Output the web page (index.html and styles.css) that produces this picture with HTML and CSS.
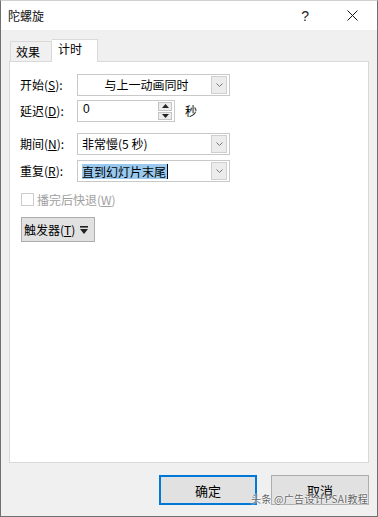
FILE: index.html
```html
<!DOCTYPE html>
<html lang="zh-CN">
<head>
  <meta charset="UTF-8" />
  <meta name="viewport" content="width=device-width, initial-scale=1.0"/>
  <title>陀螺旋</title>
  <link rel="stylesheet" href="styles.css">
</head>
<body>

  <div class="window">
    <div class="titlebar">
      <span class="title">陀螺旋</span>
      <span class="help">?</span>
      <span class="close">
        <svg width="11" height="11" viewBox="0 0 11 11"><path d="M0.5 0.5 L10.5 10.5 M10.5 0.5 L0.5 10.5" stroke="#111" stroke-width="1"/></svg>
      </span>
    </div>

    <div class="client">
      <div class="tabs">
        <div class="tab">效果</div>
        <div class="tab active">计时</div>
      </div>

      <div class="panel">
        <div class="row">
          <span class="label">开始(<u>S</u>):</span>
          <div class="combo center">
            <span class="value">与上一动画同时</span>
            <span class="drop"><svg width="7" height="4" viewBox="0 0 7 4"><path d="M0.5 0.5 L3.5 3.5 L6.5 0.5" fill="none" stroke="#777" stroke-width="1"/></svg></span>
          </div>
        </div>

        <div class="row delay">
          <span class="label">延迟(<u>D</u>):</span>
          <div class="spinbox">
            <span class="value">0</span>
            <div class="spins">
              <span class="spin"><svg width="7" height="4" viewBox="0 0 7 4"><path d="M0 4 L3.5 0 L7 4 Z" fill="#222"/></svg></span>
              <span class="spin"><svg width="7" height="4" viewBox="0 0 7 4"><path d="M0 0 L3.5 4 L7 0 Z" fill="#222"/></svg></span>
            </div>
          </div>
          <span class="unit">秒</span>
        </div>

        <div class="row duration">
          <span class="label">期间(<u>N</u>):</span>
          <div class="combo">
            <span class="value">非常慢(5 秒)</span>
            <span class="drop"><svg width="7" height="4" viewBox="0 0 7 4"><path d="M0.5 0.5 L3.5 3.5 L6.5 0.5" fill="none" stroke="#777" stroke-width="1"/></svg></span>
          </div>
        </div>

        <div class="row repeat">
          <span class="label">重复(<u>R</u>):</span>
          <div class="combo">
            <span class="value"><span class="selected">直到幻灯片末尾</span><span class="caret"></span></span>
            <span class="drop"><svg width="7" height="4" viewBox="0 0 7 4"><path d="M0.5 0.5 L3.5 3.5 L6.5 0.5" fill="none" stroke="#777" stroke-width="1"/></svg></span>
          </div>
        </div>

        <div class="check">
          <span class="box"></span>
          <span>播完后快退(<u>W</u>)</span>
        </div>

        <button class="trigger">
          <span class="trigger-text">触发器(<u>T</u>)</span>
          <svg width="8" height="8" viewBox="0 0 8 8"><rect x="0" y="0" width="8" height="1.6" fill="#222"/><path d="M0 3 L8 3 L4 8 Z" fill="#222"/></svg>
        </button>
      </div>

      <div class="actions">
        <button class="btn primary">确定</button>
        <button class="btn">取消</button>
      </div>
    </div>

    <div class="watermark">头条 @广告设计PSAI教程</div>
  </div>

</body>
</html>
```

FILE: styles.css
```css
* { box-sizing: border-box; }

body {
  margin: 0;
  font-family: "Noto Sans CJK SC", "Noto Sans", sans-serif;
  font-size: 12px;
  color: #000;
  background: #fff;
}

.window {
  position: relative;
  width: 378px;
  height: 517px;
  border: 1px solid #707070;
  border-top-color: #d0d0d0;
  display: flex;
  flex-direction: column;
  background: #f0f0f0;
}

.titlebar {
  height: 29px;
  background: #fff;
  display: flex;
  align-items: center;
  padding-left: 7px;
  flex-shrink: 0;
}

.title {
  flex: 1;
  font-size: 12px;
  line-height: 14px;
  color: #111;
}

.help {
  font-family: "Liberation Sans", sans-serif;
  font-size: 14px;
  color: #222;
  margin-right: 38px;
}

.close {
  display: flex;
  margin-right: 19px;
}

.client {
  flex: 1;
  display: flex;
  flex-direction: column;
  padding: 9px 8px 10px;
}

.tabs {
  display: flex;
  align-items: flex-end;
  height: 22px;
  padding-left: 1px;
  position: relative;
  z-index: 1;
}

.tab {
  height: 20px;
  width: 42px;
  border: 1px solid #d9d9d9;
  border-bottom: none;
  padding-left: 5px;
  line-height: 20px;
  background: #f0f0f0;
}

.tab.active {
  height: 23px;
  width: 46px;
  margin-bottom: -1px;
  background: #fff;
  border-left: none;
  padding-left: 6px;
  line-height: 18px;
}

.panel {
  height: 402px;
  background: #fff;
  border: 1px solid #d9d9d9;
  padding: 12px 10px;
  display: flex;
  flex-direction: column;
  align-items: flex-start;
}

.row {
  display: flex;
  align-items: center;
  height: 22px;
  margin-bottom: 4px;
}

.row.delay { margin-bottom: 11px; }
.row.duration { margin-bottom: 5px; }
.row.repeat { margin-bottom: 10px; }

.label {
  width: 57px;
  line-height: 14px;
}

.combo {
  width: 153px;
  height: 22px;
  border: 1px solid #c9c9c9;
  display: flex;
  align-items: center;
  padding: 0 2px 0 4px;
}

.combo .value {
  flex: 1;
  line-height: 14px;
  display: flex;
  align-items: center;
}

.combo.center .value {
  justify-content: center;
}

.drop {
  width: 16px;
  height: 18px;
  border: 1px solid #cfcfcf;
  background: #ececec;
  display: flex;
  align-items: center;
  justify-content: center;
}

.selected {
  background: #99c9ef;
  line-height: 15px;
  padding-right: 1px;
}

.caret {
  width: 1px;
  height: 15px;
  background: #000;
}

.spinbox {
  width: 98px;
  height: 22px;
  border: 1px solid #c9c9c9;
  display: flex;
  padding: 1px 2px 1px 5px;
}

.spinbox .value {
  flex: 1;
  font-family: "Liberation Sans", sans-serif;
  line-height: 14px;
}

.spins {
  display: flex;
  flex-direction: column;
  gap: 1px;
}

.spin {
  width: 14px;
  height: 9px;
  border: 1px solid #c4c4c4;
  background: #ececec;
  display: flex;
  align-items: center;
  justify-content: center;
}

.unit {
  margin-left: 10px;
  line-height: 14px;
}

.check {
  display: flex;
  align-items: center;
  gap: 3px;
  height: 14px;
  color: #a0a0a0;
  margin-left: 1px;
  margin-bottom: 11px;
}

.check .box {
  width: 13px;
  height: 13px;
  border: 1px solid #cccccc;
  background: #fff;
}

.trigger {
  width: 74px;
  height: 25px;
  margin-left: 1px;
  border: 1px solid #adadad;
  background: #e1e1e1;
  font: inherit;
  color: #000;
  display: flex;
  align-items: center;
  gap: 5px;
  padding: 0 0 0 2px;
}

.trigger-text {
  white-space: nowrap;
  line-height: 14px;
}

.actions {
  display: flex;
  justify-content: flex-end;
  gap: 14px;
  margin-top: 12px;
}

.btn {
  width: 98px;
  height: 30px;
  border: 1px solid #adadad;
  background: #e1e1e1;
  font: inherit;
  font-size: 13px;
  color: #000;
}

.btn.primary {
  border: 2px solid #0078d7;
}

.watermark {
  position: absolute;
  right: 9px;
  bottom: 11px;
  font-size: 10px;
  line-height: 12px;
  letter-spacing: 0.3px;
  color: #666;
  text-shadow: 0 0 2px #fff, 0 0 2px #fff;
}
```
